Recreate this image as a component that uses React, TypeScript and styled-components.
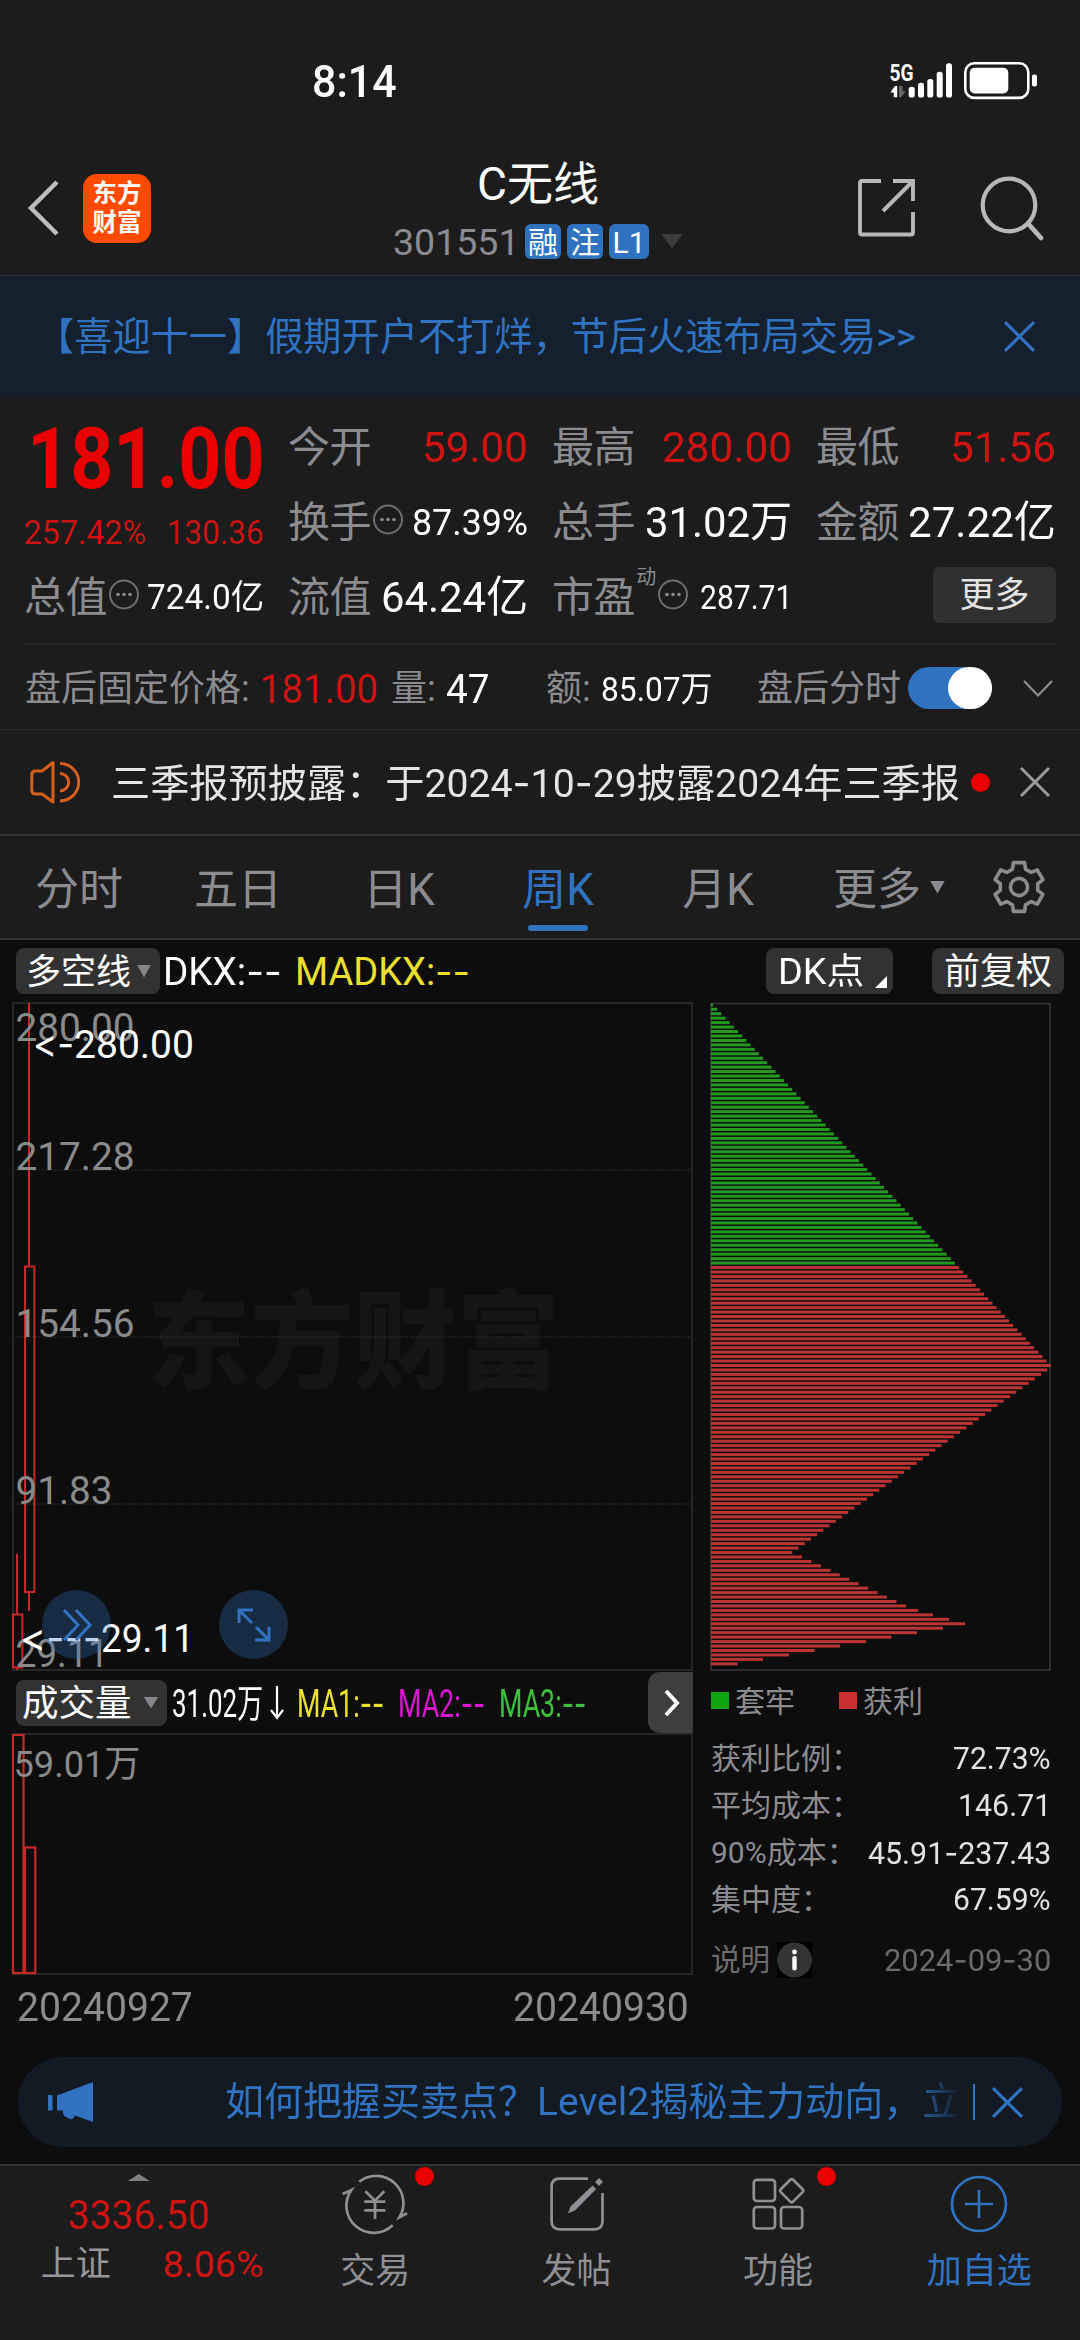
import React, { useLayoutEffect, useRef, useState } from 'react';
import styled, { createGlobalStyle } from 'styled-components';

const FONT = "Roboto, 'Noto Sans CJK SC', sans-serif";

const color = {
  page: '#1c1c1c',
  chart: '#0d0d0d',
  line: '#2a2a2a',
  grid: '#262626',
  label: '#8c8c90',
  axis: '#8a8a8a',
  red: '#cf1313',
  hot: '#ea0000',
  blue: '#3173c0',
  chip: '#323232',
  up: '#c62a28',
};

const GlobalStyle = createGlobalStyle`
  * { box-sizing: border-box; }
  body { margin: 0; background: ${color.page}; font-family: ${FONT}; }
`;

/* ---------- text ---------- */

interface TextProps {
  $size: number;
  $color?: string;
  $weight?: number;
  $ls?: number;
}

const Text = styled.span<TextProps>`
  display: block;
  flex: none;
  padding-top: 3px;
  white-space: nowrap;
  line-height: 1.2;
  font-size: ${p => p.$size}px;
  color: ${p => p.$color ?? color.label};
  font-weight: ${p => p.$weight ?? 400};
  letter-spacing: ${p => p.$ls ?? 0}px;
`;

const FitBox = styled.span<{ $w: number }>`
  display: block;
  flex: none;
  width: ${p => p.$w}px;
`;

const FitInner = styled(Text)`
  width: max-content;
  transform-origin: 0 50%;
`;

const Dash = styled.span`
  font-family: Inter, sans-serif;
  font-feature-settings: 'calt' 0;
`;

/* Roboto's hyphen is very short, so hyphens are set in Inter. */
function withDashes(text: string) {
  return text.split(/(-+)/).map((part, i) => (part.startsWith('-') ? <Dash key={i}>{part}</Dash> : part));
}

/* Single-line text squeezed or stretched to a given width. */
function Fit({ w, size, color: c, weight, children }: {
  w: number; size: number; color?: string; weight?: number; children: string;
}) {
  const ref = useRef<HTMLSpanElement>(null);
  const [k, setK] = useState(1);
  useLayoutEffect(() => {
    if (ref.current) setK(w / ref.current.offsetWidth);
  }, [w, children]);
  return (
    <FitBox $w={w}>
      <FitInner ref={ref} $size={size} $color={c} $weight={weight} style={{ transform: `scaleX(${k})` }}>
        {withDashes(children)}
      </FitInner>
    </FitBox>
  );
}

const Svg = styled.svg`
  display: block;
  flex: none;
  overflow: visible;
`;

function CloseIcon({ size, stroke, width = 3 }: { size: number; stroke: string; width?: number }) {
  return (
    <Svg width={size} height={size} viewBox="0 0 30 30" fill="none" stroke={stroke} strokeWidth={width}>
      <path d="M1 1 29 29M29 1 1 29" />
    </Svg>
  );
}

const Caret = styled.i<{ $w: number; $h: number; $color: string; $up?: boolean }>`
  display: block;
  flex: none;
  width: ${p => p.$w}px;
  height: ${p => p.$h}px;
  background: ${p => p.$color};
  clip-path: ${p => (p.$up ? 'polygon(50% 0, 100% 100%, 0 100%)' : 'polygon(0 0, 100% 0, 50% 100%)')};
`;

/* ---------- status bar ---------- */

const Page = styled.main`
  display: flex;
  flex-direction: column;
  width: 1080px;
  height: 2340px;
  overflow: hidden;
  background: ${color.page};
`;

const StatusBar = styled.div`
  display: flex;
  align-items: flex-start;
  justify-content: space-between;
  height: 110px;
  padding: 52px 42px 0 312px;
`;

function StatusIcons() {
  const bars = [[910.7, 86.7], [920, 82.7], [929.3, 79], [938.7, 71.7], [948, 63.3]];
  return (
    <Svg width="148" height="58" viewBox="889 52 148 58">
      <text x="888.5" y="80.8" fontSize="23" fontWeight="700" fill="#fff" textLength="24" lengthAdjust="spacingAndGlyphs">5G</text>
      <path d="M896.2 97.3V86H894l-4.7 6.5h3.4v4.8z" fill="#fff" />
      <path d="M898 86v11.3h2l4.6-6h-3V86z" fill="#666" />
      {bars.map(([x, y]) => (
        <rect key={x} x={x - 3} y={y} width="6" height={97.5 - y} rx="2.6" fill="#fff" />
      ))}
      <rect x="964.3" y="63.3" width="63" height="34.6" rx="9" fill="none" stroke="#fff" strokeWidth="2.6" />
      <rect x="968.7" y="67.7" width="38.6" height="25.8" rx="5" fill="#fff" />
      <rect x="1031" y="74.5" width="5" height="12" rx="2" fill="#fff" />
    </Svg>
  );
}

/* ---------- header ---------- */

const Header = styled.header`
  display: grid;
  grid-template-columns: 390px 296px 394px;
  height: 166px;
  border-bottom: 1px solid #303236;
`;

const HeaderSide = styled.div<{ $end?: boolean }>`
  display: flex;
  align-items: center;
  justify-content: ${p => (p.$end ? 'flex-end' : 'flex-start')};
  gap: ${p => (p.$end ? 64 : 24)}px;
  height: 134px;
  margin-top: 31px;
  padding: ${p => (p.$end ? '0 37px 0 0' : '0 0 0 27px')};
`;

const AppLogo = styled.div`
  display: flex;
  flex-direction: column;
  align-items: center;
  justify-content: center;
  width: 68px;
  height: 69px;
  border-radius: 14px;
  background: #ff4a00;
  color: #fff;
  font-size: 24.5px;
  font-weight: 700;
  line-height: 29px;
  white-space: nowrap;
`;

const TitleBlock = styled.div`
  padding-top: 44px;
`;

const Center = styled.div<{ $h: number; $gap?: number }>`
  display: flex;
  align-items: center;
  justify-content: center;
  gap: ${p => p.$gap ?? 0}px;
  height: ${p => p.$h}px;
`;

const Badge = styled.span<{ $w: number }>`
  flex: none;
  width: ${p => p.$w}px;
  height: 35px;
  border-radius: 6px;
  background: #2f72c0;
  color: #fff;
  font-size: 30px;
  line-height: 37px;
  text-align: center;
  white-space: nowrap;
`;

const Banner = styled.div`
  display: flex;
  align-items: center;
  justify-content: space-between;
  height: 120px;
  padding: 0 45px 0 36px;
  background: #14202e;
`;

/* ---------- quote ---------- */

const Quote = styled.section`
  display: grid;
  grid-template-columns: repeat(4, 240px);
  grid-template-rows: repeat(3, 75px);
  column-gap: 24px;
  height: 249px;
  margin: 0 24px;
  padding-top: 13px;
  border-bottom: 2px solid ${color.line};
`;

const PriceCell = styled.div`
  grid-row: span 2;
  display: flex;
  flex-direction: column;
`;

const PriceSlot = styled.div`
  display: flex;
  align-items: center;
  justify-content: center;
  height: 96px;
  padding-left: 4px;
`;

const ChangeRow = styled.div`
  display: flex;
  align-items: center;
  justify-content: space-between;
  height: 54px;
`;

const Cell = styled.div`
  display: flex;
  align-items: center;
  height: 75px;
`;

const Push = styled.div`
  margin-left: auto;
`;

const Sup = styled.span`
  align-self: flex-start;
  margin: 6px 0 0 1px;
  color: ${color.label};
  font-size: 20px;
  line-height: 24px;
`;

const MoreButton = styled.button`
  width: 123px;
  height: 56px;
  margin: 0 0 3px auto;
  padding: 0;
  border: 0;
  border-radius: 6px;
  background: #303030;
  color: #e4e4e4;
  font: 400 35px/58px ${FONT};
`;

function InfoDots() {
  return (
    <Svg width="32" height="32" viewBox="0 0 32 32">
      <circle cx="17" cy="13.5" r="14" fill="none" stroke="#6e6e72" strokeWidth="2" />
      <circle cx="11" cy="13.5" r="1.8" fill="#8c8c90" />
      <circle cx="17" cy="13.5" r="1.8" fill="#8c8c90" />
      <circle cx="23" cy="13.5" r="1.8" fill="#8c8c90" />
    </Svg>
  );
}

function Field({ label, value, w, size, hot, info, sup }: {
  label: string; value: string; w: number; size: number; hot?: boolean; info?: boolean; sup?: string;
}) {
  return (
    <Cell>
      <Text $size={42} $ls={-0.4}>{label}</Text>
      {sup && <Sup>{sup}</Sup>}
      {info && <InfoDots />}
      <Push>
        <Fit w={w} size={size} color={hot ? color.red : '#fff'}>{value}</Fit>
      </Push>
    </Cell>
  );
}

/* ---------- after-hours, notice, tabs ---------- */

const AfterHours = styled.div`
  display: flex;
  align-items: center;
  height: 85px;
  padding: 2px 27px 0 25px;
  border-bottom: 1px solid ${color.line};
`;

const Gap = styled.span<{ $w: number }>`
  flex: none;
  width: ${p => p.$w}px;
`;

const Toggle = styled.span`
  display: flex;
  justify-content: flex-end;
  flex: none;
  width: 84px;
  height: 42px;
  border-radius: 21px;
  background: ${color.blue};
  &::after {
    content: '';
    width: 44px;
    height: 42px;
    border-radius: 22px;
    background: #fff;
  }
`;

const Notice = styled.div`
  display: flex;
  align-items: center;
  height: 106px;
  padding: 0 30px;
  border-bottom: 2px solid #333;
`;

const RedDot = styled.i`
  flex: none;
  width: 19px;
  height: 19px;
  border-radius: 50%;
  background: ${color.hot};
`;

const Tabs = styled.nav`
  display: flex;
  align-items: stretch;
  height: 104px;
  padding: 0 36px 0 35px;
  border-bottom: 2px solid #333;
`;

const Tab = styled.div<{ $w: number; $active?: boolean }>`
  display: flex;
  flex: none;
  flex-direction: column;
  align-items: center;
  justify-content: space-between;
  width: ${p => p.$w}px;
  padding: 26px 0 7px;
  color: ${p => (p.$active ? color.blue : color.label)};
  font-size: 44px;
  line-height: 56px;
  white-space: nowrap;
  &::after {
    content: '';
    width: 60px;
    height: 6px;
    border-radius: 3px;
    background: ${p => (p.$active ? color.blue : 'transparent')};
  }
`;

const TabsEnd = styled.div<{ $ml: number }>`
  display: flex;
  align-items: center;
  margin-left: ${p => p.$ml}px;
`;

function Gear() {
  const pts: string[] = [];
  for (let i = 0; i < 6; i++) {
    const a = -90 + i * 60;
    [[-20, 19], [-13, 25], [13, 25], [20, 19]].forEach(([d, r]) => {
      const t = ((a + d) * Math.PI) / 180;
      pts.push(`${(26 + r * Math.cos(t)).toFixed(2)},${(26 + r * Math.sin(t)).toFixed(2)}`);
    });
  }
  return (
    <Svg width="52" height="52" viewBox="0 0 52 52" fill="none" stroke={color.label} strokeWidth="3.6" strokeLinejoin="round">
      <polygon points={pts.join(' ')} />
      <circle cx="26" cy="26" r="8.6" />
    </Svg>
  );
}

/* ---------- charts ---------- */

const ChartArea = styled.section`
  height: 1224px;
  background: ${color.chart};
`;

const Toolbar = styled.div`
  display: flex;
  align-items: center;
  height: 62px;
  padding: 0 16px;
`;

const Chip = styled.div<{ $w: number; $pl?: number }>`
  display: flex;
  flex: none;
  align-items: center;
  gap: 6px;
  width: ${p => p.$w}px;
  height: 46px;
  padding-left: ${p => p.$pl ?? 12}px;
  border-radius: 8px;
  background: ${color.chip};
`;

const Corner = styled.i`
  align-self: flex-end;
  width: 12px;
  height: 12px;
  margin: 0 0 6px 5px;
  background: #fff;
  clip-path: polygon(100% 0, 100% 100%, 0 100%);
`;

const Charts = styled.div`
  display: grid;
  grid-template-columns: 681px 341px;
  column-gap: 17px;
  padding: 1px 0 0 12px;
  height: 1036px;
`;

const KLine = styled.div`
  position: relative;
  height: 668px;
`;

const RoundButton = styled.button<{ $left: number }>`
  position: absolute;
  left: ${p => p.$left}px;
  bottom: 12px;
  display: grid;
  place-items: center;
  width: 69px;
  height: 69px;
  padding: 0;
  border: 0;
  border-radius: 50%;
  background: rgba(47, 114, 192, 0.3);
`;

const VolumeHeader = styled.div`
  display: flex;
  align-items: center;
  height: 63px;
  padding-left: 4px;
`;

const NextButton = styled.button`
  display: grid;
  place-items: center;
  width: 45px;
  height: 61px;
  margin: 0 0 0 auto;
  padding: 0 0 0 2px;
  border: 0;
  border-radius: 12px 0 0 12px;
  background: #3e3e3e;
`;

const Dates = styled.div`
  display: flex;
  align-items: center;
  justify-content: space-between;
  height: 63px;
  padding: 0 4px 0 5px;
`;

const Legend = styled.div`
  display: flex;
  align-items: center;
  height: 63px;
  padding-bottom: 5px;
`;

const Swatch = styled.i<{ $color: string }>`
  flex: none;
  width: 18px;
  height: 17px;
  margin: 1px 6px 0 1px;
  background: ${p => p.$color};
`;

const Stat = styled.div<{ $h?: number }>`
  display: flex;
  align-items: center;
  justify-content: space-between;
  height: ${p => p.$h ?? 47}px;
  padding-left: 1px;
`;

const InfoBadge = styled.span`
  display: grid;
  place-items: center;
  flex: none;
  width: 35px;
  height: 36px;
  margin: 2px 0 0 7px;
  background: #000;
`;

const Inline = styled.div`
  display: flex;
  align-items: center;
`;

const ChartLabel = styled.text<{ $arrow?: boolean }>`
  font-family: ${p => (p.$arrow ? 'Inter, sans-serif' : FONT)};
  font-feature-settings: 'calt' 0;
`;

function AxisText({ x, y, w, children, fill = color.axis, size = 39.5, arrow }: {
  x: number; y: number; w: number; children: string; fill?: string; size?: number; arrow?: boolean;
}) {
  return (
    <ChartLabel x={x} y={y} fontSize={size} fill={fill} $arrow={arrow} textLength={w} lengthAdjust="spacingAndGlyphs">
      {children}
    </ChartLabel>
  );
}

function PriceChart() {
  return (
    <Svg width="681" height="668" viewBox="12 1003 681 668">
      <text x="147" y="1380" fontSize="107" fontWeight="900" fill="#151515" textLength="413" lengthAdjust="spacingAndGlyphs">东方财富</text>
      <rect x="13" y="1003" width="679" height="667" fill="none" stroke={color.grid} strokeWidth="2" />
      {[1170, 1337, 1504].map(y => (
        <path key={y} d={`M13 ${y}H692`} stroke="#2a2a2a" strokeWidth="1.6" strokeDasharray="1.6 1.6" />
      ))}
      <g fill="none" stroke={color.up} strokeWidth="2">
        <path d="M29 1003V1265.5M29 1592V1611M17 1554V1614M17 1667V1670" />
        <rect x="25" y="1266.5" width="9.4" height="325.5" />
        <rect x="13" y="1614.5" width="9.4" height="53" />
      </g>
      <AxisText x={15.5} y={1041} w={119}>280.00</AxisText>
      <AxisText x={15.5} y={1170} w={119}>217.28</AxisText>
      <AxisText x={15.5} y={1337} w={119}>154.56</AxisText>
      <AxisText x={15.5} y={1504} w={97}>91.83</AxisText>
      <AxisText x={15.5} y={1667} w={93}>29.11</AxisText>
      <AxisText x={33} y={1058} w={41} fill="#fff" arrow>&lt;-</AxisText>
      <AxisText x={74} y={1058} w={120} fill="#fff">280.00</AxisText>
      <AxisText x={20} y={1652} w={81} fill="#fff" arrow>&lt;---</AxisText>
      <AxisText x={101} y={1652} w={93} fill="#fff">29.11</AxisText>
    </Svg>
  );
}

function VolumeChart() {
  return (
    <Svg width="681" height="241" viewBox="12 1734 681 241">
      <rect x="13" y="1734" width="679" height="240" fill="none" stroke={color.grid} strokeWidth="2" />
      <g fill="none" stroke={color.up} strokeWidth="2.2">
        <rect x="13" y="1735" width="10.5" height="238" />
        <rect x="25" y="1847.5" width="10.3" height="125.5" />
      </g>
      <AxisText x={13.5} y={1777} w={127} size={37}>59.01万</AxisText>
    </Svg>
  );
}

const TAIL = [195, 207, 222, 238, 254, 232, 206, 180.5, 155, 129, 103.5, 78, 52, 26.5];

function chipWidth(i: number) {
  if (i <= 81) return 2 + 4.17 * i;
  if (i <= 123) return 336.3 - 6.22 * (i - 82);
  if (i < 135) return 91 + 9.45 * (i - 124);
  return TAIL[i - 135];
}

function ChipDistribution() {
  return (
    <Svg width="341" height="668" viewBox="0 0 341 668">
      <rect x="1" y="0.5" width="339" height="666.5" fill="none" stroke="#383838" strokeWidth="1.5" />
      {Array.from({ length: 149 }, (_, i) => (
        <rect
          key={i}
          x="1"
          y={0.3 + i * 4.453}
          width={chipWidth(i)}
          height="3"
          fill={i < 59 ? '#22991f' : '#b93432'}
        />
      ))}
    </Svg>
  );
}

const STATS = [
  { label: '获利比例：', value: '72.73%', w: 98 },
  { label: '平均成本：', value: '146.71', w: 93 },
  { label: '90%成本：', value: '45.91-237.43', w: 183 },
  { label: '集中度：', value: '67.59%', w: 98 },
];

/* ---------- promo and bottom bar ---------- */

const Promo = styled.div`
  display: flex;
  align-items: center;
  height: 90px;
  margin: 19px 18px 0;
  padding: 0 38px 0 30px;
  border-radius: 45px;
  background: #121a23;
`;

const PromoText = styled.div`
  flex: none;
  width: 732px;
  margin-left: 132px;
  color: ${color.blue};
  font-size: 39px;
  line-height: 56px;
  white-space: nowrap;
  mask-image: linear-gradient(90deg, #000 93%, transparent 101%);
`;

const PromoRule = styled.i`
  flex: none;
  width: 2px;
  height: 36px;
  margin: 0 17px 0 16px;
  background: ${color.blue};
`;

const BottomBar = styled.footer`
  display: grid;
  grid-template-columns: 274.6px repeat(4, 1fr);
  height: 176px;
  border-top: 2px solid #343434;
`;

const IndexBlock = styled.div`
  display: flex;
  flex-direction: column;
  align-items: center;
  padding: 8px 0 0 3px;
`;

const IndexRow = styled.div`
  display: flex;
  align-items: center;
  justify-content: space-between;
  width: 223px;
  height: 36px;
  margin-left: 27px;
`;

const NavItem = styled.div<{ $active?: boolean }>`
  display: flex;
  flex-direction: column;
  align-items: center;
  gap: 16px;
  padding-top: 8px;
  color: ${p => (p.$active ? color.blue : '#8f8f94')};
  font-size: 35px;
  line-height: 44px;
`;

const NavIcon = styled.div`
  position: relative;
  height: 60px;
`;

const NavDot = styled(RedDot)`
  position: absolute;
  left: 69.5px;
  top: -7px;
`;

function NavGlyph({ children }: { children: React.ReactNode }) {
  return (
    <Svg width="60" height="60" viewBox="0 0 60 60" fill="none" stroke="currentColor" strokeWidth="2.7">
      {children}
    </Svg>
  );
}

export default function App() {
  return (
    <Page>
      <GlobalStyle />
      <StatusBar>
        <Fit w={85} size={45} color="#fff" weight={500}>8:14</Fit>
        <StatusIcons />
      </StatusBar>

      <Header>
        <HeaderSide>
          <Svg width="32" height="56" viewBox="0 0 32 56" fill="none" stroke="#bdbdbd" strokeWidth="4.5">
            <path d="M30 2 4 28 30 54" />
          </Svg>
          <AppLogo>
            <span>东方</span>
            <span>财富</span>
          </AppLogo>
        </HeaderSide>
        <TitleBlock>
          <Center $h={58}>
            <Text $size={46} $color="#fff">C无线</Text>
          </Center>
          <Center $h={58} $gap={6}>
            <Fit w={126} size={37.5}>301551</Fit>
            <Badge $w={36}>融</Badge>
            <Badge $w={36}>注</Badge>
            <Badge $w={40}>L1</Badge>
            <Gap $w={0} />
            <Caret $w={22} $h={15} $color="#3c3c3c" />
          </Center>
        </TitleBlock>
        <HeaderSide $end>
          <Svg width="58" height="58" viewBox="0 0 58 58" fill="none" stroke="#b8b8b8" strokeWidth="3.9">
            <path d="M23 2H4Q2 2 2 4V53.5Q2 55.5 4 55.5H53Q55 55.5 55 53.5V33M35 2H55V22M55 2 25 32" />
          </Svg>
          <Svg width="63" height="62" viewBox="0 0 63 62" fill="none" stroke="#b8b8b8" strokeWidth="4.2" strokeLinecap="round">
            <circle cx="29" cy="28" r="26.3" />
            <path d="M48 46.5 61 61" strokeWidth="4.8" />
          </Svg>
        </HeaderSide>
      </Header>

      <Banner>
        <Text $size={38.2} $color={color.blue}>【喜迎十一】假期开户不打烊，节后火速布局交易&gt;&gt;</Text>
        <CloseIcon size={31} stroke={color.blue} />
      </Banner>

      <Quote>
        <PriceCell>
          <PriceSlot>
            <Fit w={238} size={86} color={color.hot} weight={700}>181.00</Fit>
          </PriceSlot>
          <ChangeRow>
            <Fit w={123} size={33.5} color={color.red}>257.42%</Fit>
            <Fit w={97} size={33.5} color={color.red}>130.36</Fit>
          </ChangeRow>
        </PriceCell>
        <Field label="今开" value="59.00" w={106} size={43} hot />
        <Field label="最高" value="280.00" w={130} size={43} hot />
        <Field label="最低" value="51.56" w={106} size={43} hot />
        <Field label="换手" value="87.39%" w={116} size={37} info />
        <Field label="总手" value="31.02万" w={147} size={43} />
        <Field label="金额" value="27.22亿" w={148} size={43} />
        <Field label="总值" value="724.0亿" w={117} size={34.5} info />
        <Field label="流值" value="64.24亿" w={147} size={43} />
        <Field label="市盈" value="287.71" w={92} size={33} sup="动" info />
        <Cell>
          <MoreButton>更多</MoreButton>
        </Cell>
      </Quote>

      <AfterHours>
        <Fit w={225} size={36}>盘后固定价格:</Fit>
        <Gap $w={10} />
        <Fit w={119} size={40.5} color={color.red}>181.00</Fit>
        <Gap $w={12} />
        <Fit w={45} size={36}>量:</Fit>
        <Gap $w={10} />
        <Fit w={44} size={40.5} color="#fff">47</Fit>
        <Gap $w={56} />
        <Fit w={45} size={36}>额:</Fit>
        <Gap $w={10} />
        <Fit w={111} size={34} color="#fff">85.07万</Fit>
        <Gap $w={45} />
        <Text $size={36}>盘后分时</Text>
        <Gap $w={7} />
        <Toggle />
        <Push>
          <Svg width="30" height="17" viewBox="0 0 30 17" fill="none" stroke="#8f8f8f" strokeWidth="2.2">
            <path d="M1 1 15 15.5 29 1" />
          </Svg>
        </Push>
      </AfterHours>

      <Notice>
        <Svg width="50" height="44" viewBox="0 0 50 44" fill="none" stroke="#d65f1d" strokeWidth="3" strokeLinejoin="round">
          <path d="M23 2.5V42L12 34H5.5Q1.8 34 1.8 30V15Q1.8 11 5.5 11H12z" />
          <path d="M30 13.5a8.7 8.7 0 0 1 0 17.4M30 3.5a18.7 18.7 0 0 1 0 37.4" />
        </Svg>
        <Gap $w={31} />
        <Fit w={849} size={39} color="#e4e4e4">三季报预披露：于2024-10-29披露2024年三季报</Fit>
        <Gap $w={11} />
        <RedDot />
        <Push>
          <CloseIcon size={30} stroke="#9a9a9a" />
        </Push>
      </Notice>

      <Tabs>
        <Tab $w={88}>分时</Tab>
        <Gap $w={71} />
        <Tab $w={88}>五日</Tab>
        <Gap $w={79} />
        <Tab $w={76}>日K</Tab>
        <Gap $w={83} />
        <Tab $w={76} $active>周K</Tab>
        <Gap $w={84} />
        <Tab $w={76}>月K</Tab>
        <Gap $w={77} />
        <Tab $w={88}>更多</Tab>
        <TabsEnd $ml={9}>
          <Caret $w={15} $h={13} $color={color.label} />
        </TabsEnd>
        <TabsEnd $ml={48}>
          <Gear />
        </TabsEnd>
      </Tabs>

      <ChartArea>
        <Toolbar>
          <Chip $w={144} $pl={10}>
            <Text $size={35} $color="#fff">多空线</Text>
            <Caret $w={14} $h={13} $color="#85858a" />
          </Chip>
          <Gap $w={3} />
          <Fit w={119} size={38} color="#fff">DKX:--</Fit>
          <Gap $w={13} />
          <Fit w={175} size={38} color="#ece02e">MADKX:--</Fit>
          <Push>
            <Inline>
              <Chip $w={127}>
                <Fit w={86} size={36} color="#fff">DK点</Fit>
                <Corner />
              </Chip>
              <Gap $w={39} />
              <Chip $w={132}>
                <Text $size={36} $color="#fff">前复权</Text>
              </Chip>
            </Inline>
          </Push>
        </Toolbar>

        <Charts>
          <div>
            <KLine>
              <PriceChart />
              <RoundButton $left={30}>
                <Svg width="30" height="32" viewBox="0 0 30 32" fill="none" stroke={color.blue} strokeWidth="3">
                  <path d="M2 1 16 16 2 31M14 1 28 16 14 31" />
                </Svg>
              </RoundButton>
              <RoundButton $left={207}>
                <Svg width="34" height="34" viewBox="0 0 34 34" fill="none" stroke={color.blue} strokeWidth="3">
                  <path d="M2 15V2H16M2 2 15 15M32 19V32H18M32 32 19 19" />
                </Svg>
              </RoundButton>
            </KLine>
            <VolumeHeader>
              <Chip $w={151} $pl={6}>
                <Text $size={36.5} $color="#fff">成交量</Text>
                <Gap $w={0} />
                <Caret $w={15} $h={12} $color="#85858a" />
              </Chip>
              <Gap $w={5} />
              <Fit w={91} size={38.5} color="#fff">31.02万</Fit>
              <Gap $w={7} />
              <Svg width="14" height="34" viewBox="0 0 14 34" fill="none" stroke="#fff" strokeWidth="2.2">
                <path d="M7 0V32M1 24 7 32 13 24" />
              </Svg>
              <Gap $w={13} />
              <Fit w={87} size={38.5} color="#ece02e">MA1:--</Fit>
              <Gap $w={14} />
              <Fit w={87} size={38.5} color="#d916d0">MA2:--</Fit>
              <Gap $w={14} />
              <Fit w={87} size={38.5} color="#3cc13c">MA3:--</Fit>
              <NextButton>
                <Svg width="16" height="28" viewBox="0 0 16 28" fill="none" stroke="#fff" strokeWidth="4">
                  <path d="M2 2 13 14 2 26" />
                </Svg>
              </NextButton>
            </VolumeHeader>
            <VolumeChart />
            <Dates>
              <Fit w={176} size={40}>20240927</Fit>
              <Fit w={176} size={40}>20240930</Fit>
            </Dates>
          </div>

          <div>
            <ChipDistribution />
            <Legend>
              <Swatch $color="#12a512" />
              <Text $size={30}>套牢</Text>
              <Gap $w={43} />
              <Swatch $color="#ca3030" />
              <Text $size={30}>获利</Text>
            </Legend>
            {STATS.map(s => (
              <Stat key={s.label}>
                <Text $size={30}>{s.label}</Text>
                <Fit w={s.w} size={31} color="#e2e2e2">{s.value}</Fit>
              </Stat>
            ))}
            <Stat $h={74}>
              <Inline>
                <Text $size={29.5} $color="#6c6c6e">说明</Text>
                <InfoBadge>
                  <Svg width="35" height="36" viewBox="0 0 35 36">
                    <circle cx="17.5" cy="18" r="17.5" fill="#343434" />
                    <circle cx="17.5" cy="10" r="2.4" fill="#fff" />
                    <rect x="15.3" y="14" width="4.4" height="14.5" rx="2" fill="#fff" />
                  </Svg>
                </InfoBadge>
              </Inline>
              <Fit w={167} size={32} color="#6a6a6c">2024-09-30</Fit>
            </Stat>
          </div>
        </Charts>

        <Promo>
          <Svg width="45" height="40" viewBox="0 0 45 40" fill={color.blue}>
            <path d="M45 0V40L27 33.5Q25 38 22 37L17 34.5Q15 33 15 28.5H9V13.5z" />
            <rect x="0" y="13" width="4.5" height="15.5" />
          </Svg>
          <PromoText>如何把握买卖点？Level2揭秘主力动向，立</PromoText>
          <PromoRule />
          <CloseIcon size={31} stroke={color.blue} />
        </Promo>
      </ChartArea>

      <BottomBar>
        <IndexBlock>
          <Caret $w={22} $h={7} $color="#808084" $up />
          <Center $h={64}>
            <Fit w={142} size={41.5} color={color.red}>3336.50</Fit>
          </Center>
          <IndexRow>
            <Text $size={35} $color="#97979b">上证</Text>
            <Fit w={101} size={37.5} color={color.red}>8.06%</Fit>
          </IndexRow>
        </IndexBlock>
        <NavItem>
          <NavIcon>
            <NavGlyph>
              <path d="M14.3 7.7A27.3 27.3 0 0 1 54.5 43.3L62 39.3" />
              <path d="M47.6 51.3A27.3 27.3 0 0 1 6.3 16L-2.4 20" />
              <path d="M20.3 17.3 30 26.7 39.3 17.3M19.3 27.7H40.3M19.3 36.3H40.3M30 26.7V45" />
            </NavGlyph>
            <NavDot />
          </NavIcon>
          <span>交易</span>
        </NavItem>
        <NavItem>
          <NavIcon>
            <NavGlyph>
              <path d="M41 4.7H12.6Q4.6 4.7 4.6 12.7V47.3Q4.6 55.3 12.6 55.3H47.5Q55.5 55.3 55.5 47.3V19" />
              <path d="M45.5 11.5 49.2 15 28 36.5 20.9 39.3 23.5 32.5z" fill="currentColor" stroke="none" />
              <path d="M50 10 54 6" strokeWidth="5.5" />
            </NavGlyph>
          </NavIcon>
          <span>发帖</span>
        </NavItem>
        <NavItem>
          <NavIcon>
            <NavGlyph>
              <rect x="5.8" y="5.8" width="21.2" height="21.2" rx="3" />
              <rect x="5.8" y="33" width="21.2" height="21.5" rx="3" />
              <rect x="33" y="33" width="21.2" height="21.5" rx="3" />
              <rect x="35" y="8" width="17.4" height="17.4" rx="2" transform="rotate(45 43.7 16.7)" />
            </NavGlyph>
            <NavDot />
          </NavIcon>
          <span>功能</span>
        </NavItem>
        <NavItem $active>
          <NavIcon>
            <NavGlyph>
              <circle cx="30" cy="30" r="27" />
              <path d="M16 30H44M30 16V44" />
            </NavGlyph>
          </NavIcon>
          <span>加自选</span>
        </NavItem>
      </BottomBar>
    </Page>
  );
}
